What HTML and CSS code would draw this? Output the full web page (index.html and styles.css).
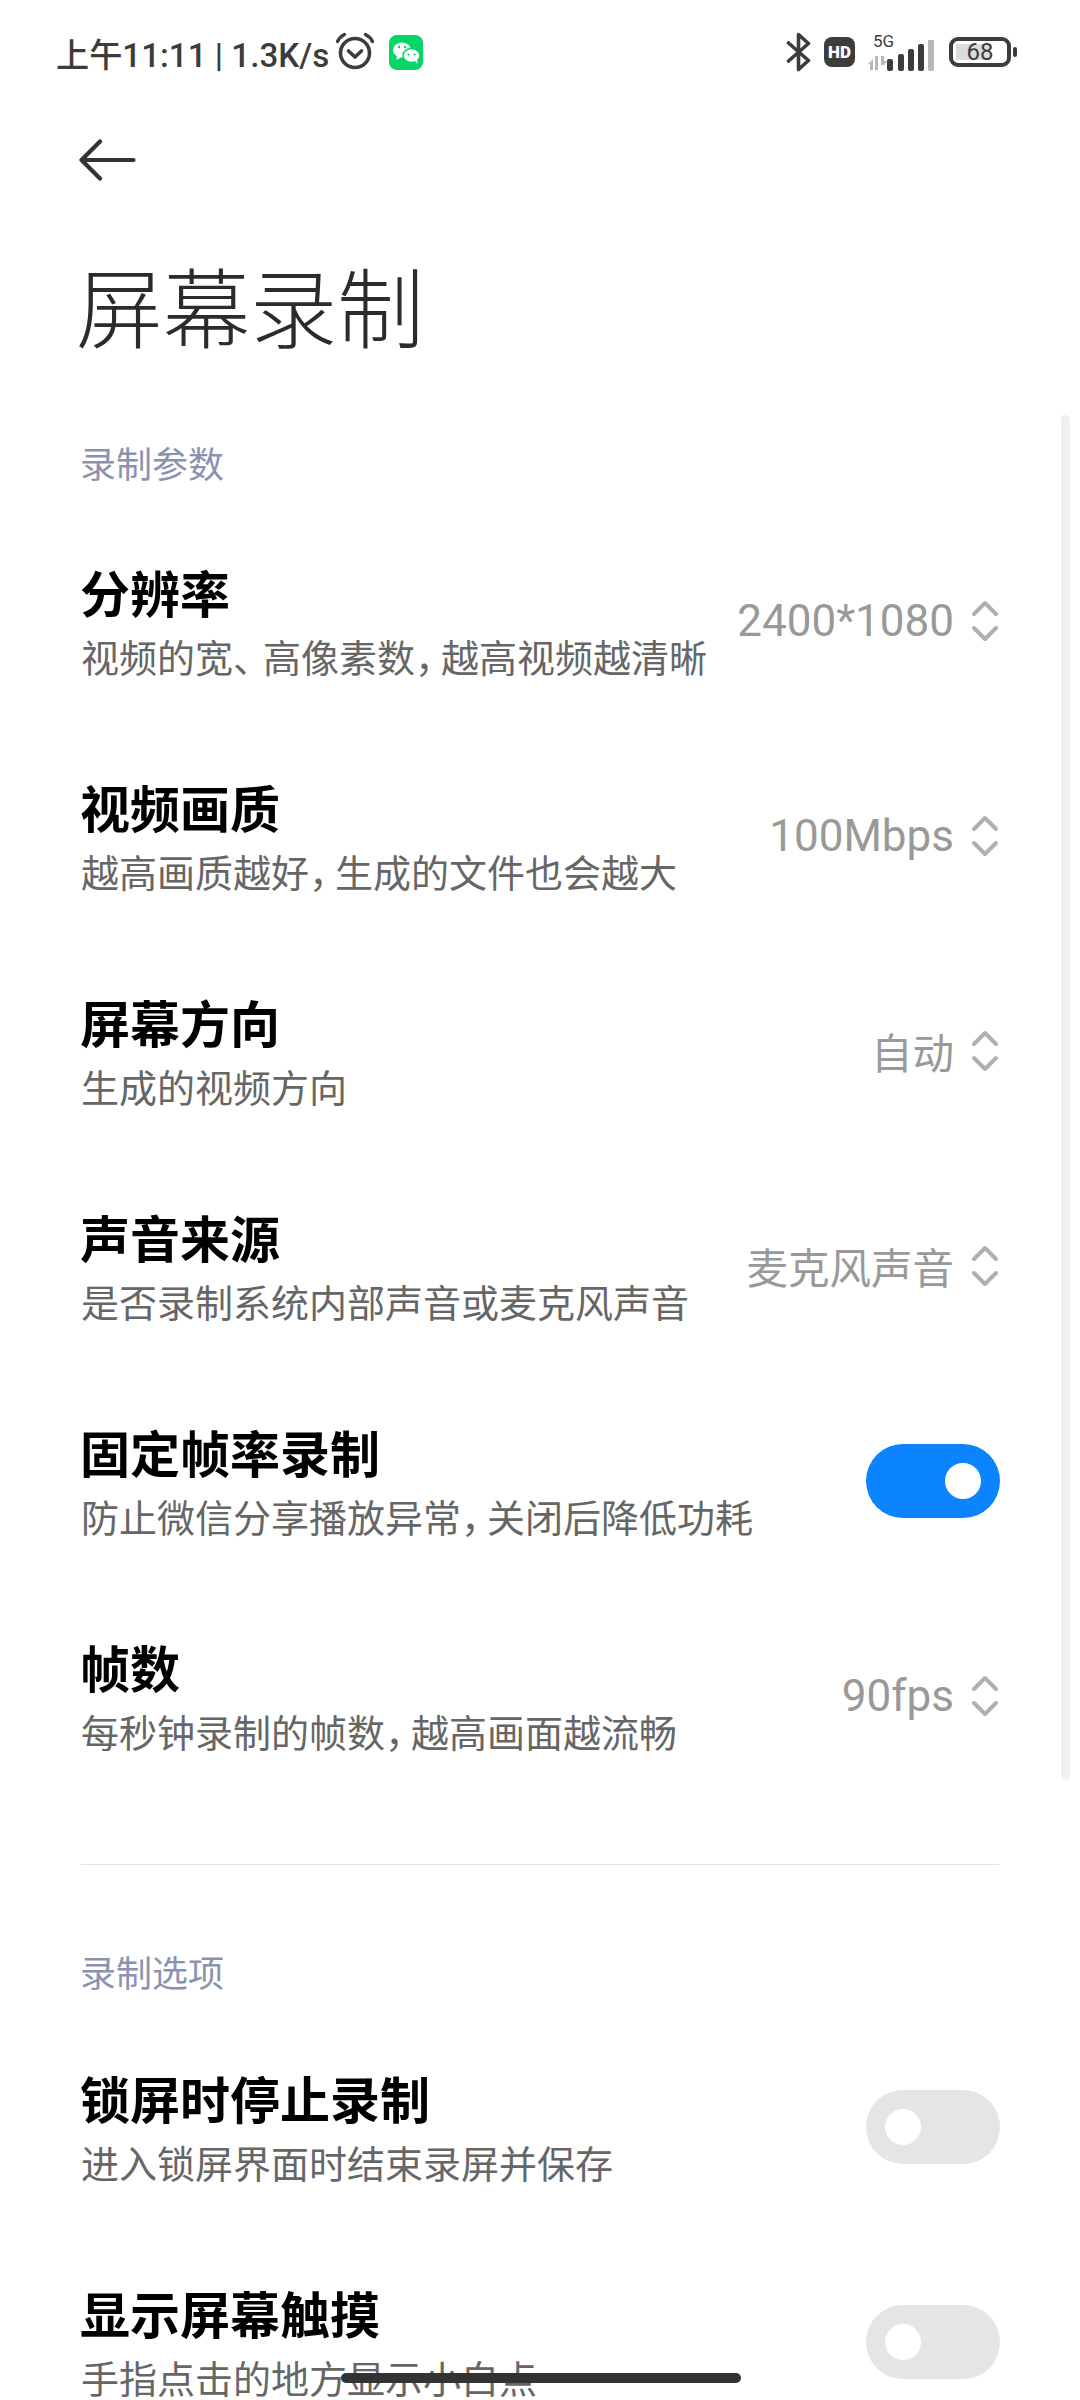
FILE: index.html
```html
<!DOCTYPE html>
<html lang="zh-CN">
<head>
    <meta charset="UTF-8">
    <title>屏幕录制</title>
    <link rel="stylesheet" href="styles.css">
</head>
<body>
    <div class="screen">
        <div class="status-bar">
            <div class="status-left">
                <span class="status-text">上午11:11 | 1.3K/s</span>
                <svg class="icon-alarm" width="40" height="38" viewBox="0 0 40 38">
                    <circle cx="20" cy="21" r="14.5" fill="none" stroke="#3c3c3c" stroke-width="3.6"/>
                    <path d="M13.5 19l6.5 6 6.5-6" fill="none" stroke="#3c3c3c" stroke-width="3.6" stroke-linecap="round" stroke-linejoin="round"/>
                    <path d="M2.5 9.5C4 6 6.500 4 9.500 2.500M37.500 9.500C36 6 33.500 4 30.500 2.500" fill="none" stroke="#3c3c3c" stroke-width="3.400" stroke-linecap="round"/>
                </svg>
                <svg class="icon-wechat" width="34" height="35" viewBox="0 0 34 35">
                    <rect width="34" height="35" rx="8" fill="#07d568"/>
                    <ellipse cx="13" cy="15" rx="9" ry="7.500" fill="#fff"/>
                    <path d="M8 20l-0.500 5 5-3z" fill="#fff"/>
                    <ellipse cx="22.500" cy="20.500" rx="8.500" ry="7" fill="#fff" stroke="#07d568" stroke-width="1.500"/>
                    <path d="M26 26l2.500 3-0.500-5z" fill="#fff"/>
                    <circle cx="10" cy="12" r="1.200" fill="#07d568"/>
                    <circle cx="16" cy="12" r="1.200" fill="#07d568"/>
                    <circle cx="19.500" cy="19.500" r="1.100" fill="#07d568"/>
                    <circle cx="25.500" cy="19.500" r="1.100" fill="#07d568"/>
                </svg>
            </div>
            <div class="status-right">
                <svg width="26" height="40" viewBox="0 0 26 40">
                    <path d="M2.500 11l20 17.500L12.500 37.500v-35l10 9L2.500 29" fill="none" stroke="#3c3c3c" stroke-width="3.600" stroke-linecap="round" stroke-linejoin="round"/>
                </svg>
                <span class="hd-badge">HD</span>
                <div class="signal">
                    <span class="signal-label">5G</span>
                    <svg width="22" height="32" viewBox="0 0 22 32">
                        <path d="M1 24l5-5v11H3v-6zM8 16h3v14H8zM14 16h3v5h3l-3 4h-3z" fill="#b8b8b8"/>
                    </svg>
                    <svg class="signal-bars" width="48" height="32" viewBox="0 0 48 30">
                        <rect x="0" y="18" width="6" height="12" rx="2" fill="#3c3c3c"/>
                        <rect x="11" y="13" width="6" height="17" rx="2" fill="#3c3c3c"/>
                        <rect x="21" y="8" width="6" height="22" rx="2" fill="#3c3c3c"/>
                        <rect x="31" y="3" width="6" height="27" rx="2" fill="#3c3c3c"/>
                        <rect x="41" y="-2" width="6" height="32" rx="2" fill="#b8b8b8"/>
                    </svg>
                </div>
                <div class="battery">
                    <div class="battery-body">
                        <div class="battery-fill"></div>
                        <span class="battery-num">68</span>
                    </div>
                    <div class="battery-nub"></div>
                </div>
            </div>
        </div>

        <div class="top-nav">
            <svg width="58" height="42" viewBox="0 0 58 42">
                <path d="M2.500 21h52M21 2.500L2.500 21 21 39.500" fill="none" stroke="#333" stroke-width="4.200" stroke-linecap="round" stroke-linejoin="round"/>
            </svg>
        </div>

        <h1 class="page-title">屏幕录制</h1>

        <div class="section-label first">录制参数</div>

        <div class="row">
            <div class="row-text">
                <div class="row-title">分辨率</div>
                <div class="row-sub">视频的宽<span class="punct wide">、</span>高像素数<span class="punct">，</span>越高视频越清晰</div>
            </div>
            <div class="row-value">2400*1080</div>
            <svg class="updown" width="30" height="44" viewBox="0 0 30 44"><path d="M4 15L15 4l11 11M4 29l11 11 11-11"/></svg>
        </div>
        <div class="row">
            <div class="row-text">
                <div class="row-title">视频画质</div>
                <div class="row-sub">越高画质越好<span class="punct">，</span>生成的文件也会越大</div>
            </div>
            <div class="row-value">100Mbps</div>
            <svg class="updown" width="30" height="44" viewBox="0 0 30 44"><path d="M4 15L15 4l11 11M4 29l11 11 11-11"/></svg>
        </div>
        <div class="row">
            <div class="row-text">
                <div class="row-title">屏幕方向</div>
                <div class="row-sub">生成的视频方向</div>
            </div>
            <div class="row-value cjk">自动</div>
            <svg class="updown" width="30" height="44" viewBox="0 0 30 44"><path d="M4 15L15 4l11 11M4 29l11 11 11-11"/></svg>
        </div>
        <div class="row">
            <div class="row-text">
                <div class="row-title">声音来源</div>
                <div class="row-sub">是否录制系统内部声音或麦克风声音</div>
            </div>
            <div class="row-value cjk">麦克风声音</div>
            <svg class="updown" width="30" height="44" viewBox="0 0 30 44"><path d="M4 15L15 4l11 11M4 29l11 11 11-11"/></svg>
        </div>
        <div class="row">
            <div class="row-text">
                <div class="row-title">固定帧率录制</div>
                <div class="row-sub">防止微信分享播放异常<span class="punct">，</span>关闭后降低功耗</div>
            </div>
            <div class="switch on"><div class="knob"></div></div>
        </div>
        <div class="row">
            <div class="row-text">
                <div class="row-title">帧数</div>
                <div class="row-sub">每秒钟录制的帧数<span class="punct">，</span>越高画面越流畅</div>
            </div>
            <div class="row-value">90fps</div>
            <svg class="updown" width="30" height="44" viewBox="0 0 30 44"><path d="M4 15L15 4l11 11M4 29l11 11 11-11"/></svg>
        </div>

        <div class="divider"></div>

        <div class="section-label">录制选项</div>

        <div class="row">
            <div class="row-text">
                <div class="row-title">锁屏时停止录制</div>
                <div class="row-sub">进入锁屏界面时结束录屏并保存</div>
            </div>
            <div class="switch"><div class="knob"></div></div>
        </div>
        <div class="row">
            <div class="row-text">
                <div class="row-title">显示屏幕触摸</div>
                <div class="row-sub">手指点击的地方显示小白点</div>
            </div>
            <div class="switch"><div class="knob"></div></div>
        </div>

        <div class="scrollbar"></div>
        <div class="home-bar"></div>
    </div>
</body>
</html>
```

FILE: styles.css
```css
* {
    box-sizing: border-box;
}

body {
    margin: 0;
    background-color: #fff;
    font-family: "Roboto", "Noto Sans CJK SC", sans-serif;
}

.screen {
    position: relative;
    width: 1080px;
    height: 2400px;
    overflow: hidden;
    background-color: #fff;
}

.status-bar {
    display: flex;
    justify-content: space-between;
    align-items: center;
    height: 104px;
    padding: 0 63px 0 56px;
    color: #3c3c3c;
}

.status-left,
.status-right {
    display: flex;
    align-items: center;
}

.status-text {
    font-size: 33.200px;
    font-weight: 500;
    white-space: nowrap;
}

.icon-alarm {
    margin-left: 6px;
    margin-bottom: 2px;
}

.icon-wechat {
    margin-left: 14px;
}

.status-right {
    gap: 12px;
}

.hd-badge {
    width: 31px;
    height: 30px;
    border-radius: 8px;
    background-color: #3c3c3c;
    color: #fff;
    font-size: 17px;
    font-weight: 900;
    line-height: 30px;
    text-align: center;
}

.signal {
    position: relative;
    display: flex;
    align-items: flex-end;
    width: 68px;
    height: 40px;
}

.signal svg {
    position: absolute;
    left: 0;
    bottom: 0;
}

.signal .signal-bars {
    left: 20px;
}

.signal-label {
    position: absolute;
    left: 6px;
    top: 0;
    font-size: 17px;
    line-height: 18px;
}

.battery {
    display: flex;
    align-items: center;
    gap: 2px;
    margin-left: 2px;
}

.battery-body {
    position: relative;
    display: flex;
    align-items: center;
    justify-content: center;
    width: 62px;
    height: 30px;
    border: 4px solid #3c3c3c;
    border-radius: 9px;
}

.battery-fill {
    position: absolute;
    left: 3px;
    top: 3px;
    bottom: 3px;
    width: 34px;
    background-color: #dcdcdc;
}

.battery-num {
    position: relative;
    font-size: 24px;
    line-height: 22px;
}

.battery-nub {
    width: 4px;
    height: 10px;
    border-radius: 2px;
    background-color: #3c3c3c;
}

.top-nav {
    display: flex;
    align-items: center;
    height: 112px;
    padding-left: 79px;
}

.page-title {
    margin: 0;
    padding-left: 76px;
    height: 188px;
    font-size: 87px;
    font-weight: 300;
    line-height: 192px;
    color: #2b2b2b;
}

.section-label {
    height: 34px;
    margin: 93px 0 27px 80px;
    font-size: 36px;
    line-height: 34px;
    font-weight: 400;
    color: #8b92b0;
}

.section-label.first {
    margin-top: 45px;
    margin-bottom: 30px;
}

.row {
    display: flex;
    align-items: center;
    height: 215px;
    padding: 0 81px;
}

.row-text {
    flex: 1;
    min-width: 0;
    padding-top: 6px;
}

.row-title {
    margin-left: -1px;
    font-size: 50px;
    font-weight: 700;
    line-height: 66px;
    color: #000;
}

.row-sub {
    margin-top: 5px;
    font-size: 38px;
    line-height: 50px;
    color: #666;
    white-space: nowrap;
}

.punct {
    letter-spacing: -12px;
}

.punct.wide {
    letter-spacing: -8px;
}

.row-value {
    margin-left: 20px;
    font-size: 44px;
    color: #999;
    white-space: nowrap;
}

.row-value.cjk {
    font-size: 41.500px;
}

.updown {
    margin-left: 16px;
    margin-right: -1px;
    fill: none;
    stroke: #b0b0b0;
    stroke-width: 4;
    stroke-linecap: round;
    stroke-linejoin: round;
}

.switch {
    position: relative;
    display: flex;
    align-items: center;
    flex: none;
    width: 134px;
    height: 74px;
    margin-right: -1px;
    padding-left: 19px;
    border-radius: 37px;
    background-color: #e5e5e5;
}

.switch.on {
    justify-content: flex-end;
    padding-left: 0;
    padding-right: 19px;
    background-color: #0d84ff;
}

.knob {
    width: 36px;
    height: 36px;
    border-radius: 50%;
    background-color: #fff;
}

.divider {
    height: 1px;
    margin: 61px 81px 0;
    background-color: #dfe3e8;
}

.scrollbar {
    position: absolute;
    left: 1061px;
    top: 415px;
    width: 9px;
    height: 1365px;
    border-radius: 5px;
    background-color: #f0f0f0;
}

.home-bar {
    position: absolute;
    left: 341px;
    top: 2373px;
    width: 400px;
    height: 10px;
    border-radius: 5px;
    background-color: #333;
}
```
